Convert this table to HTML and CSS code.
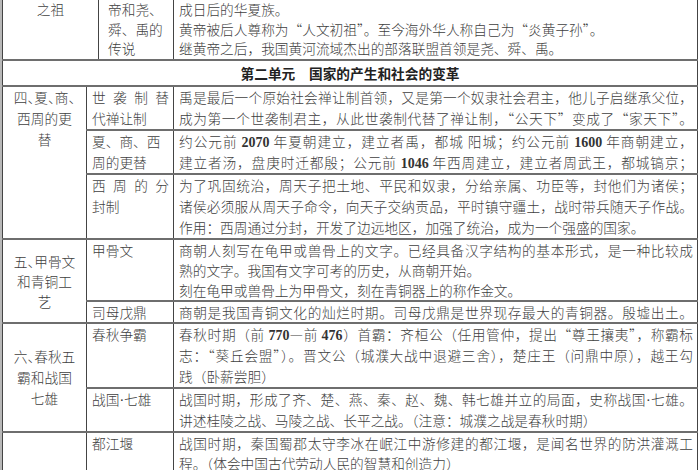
FILE: index.html
```html
<!DOCTYPE html>
<html lang="zh-CN">
<head>
<meta charset="utf-8">
<title>历史复习提纲</title>
<link rel="stylesheet" href="styles.css">
</head>
<body>
<div class="sheet">
<table class="notes">
<colgroup><col class="ca"><col class="cb"><col class="cc"><col class="cd"></colgroup>
<tr class="r0">
<td colspan="2" class="k top"><span class="ln">之祖</span></td>
<td class="s s0"><span class="ln">帝和尧、</span><span class="ln">舜、禹的</span><span class="ln">传说</span></td>
<td class="d"><span class="ln">成日后的华夏族。</span><span class="ln">黄帝被后人尊称为“人文初祖”。至今海外华人称自己为“炎黄子孙”。</span><span class="ln">继黄帝之后，我国黄河流域杰出的部落联盟首领是尧、舜、禹。</span></td>
</tr>
<tr class="hd">
<td colspan="4" class="unit">第二单元　国家的产生和社会的变革</td>
</tr>
<tr class="r1a">
<td rowspan="3" class="k top"><span class="ln halt">四、夏、商、</span><span class="ln">西周的更</span><span class="ln">替</span></td>
<td colspan="2" class="s"><span class="ln j">世袭制替</span><span class="ln">代禅让制</span></td>
<td class="d"><span class="ln j">禹是最后一个原始社会禅让制首领，又是第一个奴隶社会君主，他儿子启继承父位，</span><span class="ln j">成为第一个世袭制君主，从此世袭制代替了禅让制，“公天下”变成了“家天下”。</span></td>
</tr>
<tr class="r1b">
<td colspan="2" class="s"><span class="ln">夏、商、西</span><span class="ln">周的更替</span></td>
<td class="d"><span class="ln j">约公元前 <span class="num">2070</span> 年夏朝建立，建立者禹，都城 阳城；约公元前 <span class="num">1600</span> 年商朝建立，</span><span class="ln j">建立者汤，盘庚时迁都殷；公元前 <span class="num">1046</span> 年西周建立，建立者周武王，都城镐京；</span></td>
</tr>
<tr class="r1c">
<td colspan="2" class="s"><span class="ln j">西周的分</span><span class="ln">封制</span></td>
<td class="d"><span class="ln j">为了巩固统治，周天子把土地、平民和奴隶，分给亲属、功臣等，封他们为诸侯；</span><span class="ln j">诸侯必须服从周天子命令，向天子交纳贡品，平时镇守疆土，战时带兵随天子作战。</span><span class="ln">作用：西周通过分封，开发了边远地区，加强了统治，成为一个强盛的国家。</span></td>
</tr>
<tr class="r2a">
<td rowspan="2" class="k mid"><span class="ln halt">五、甲骨文</span><span class="ln">和青铜工</span><span class="ln">艺</span></td>
<td colspan="2" class="s"><span class="ln">甲骨文</span></td>
<td class="d"><span class="ln j">商朝人刻写在龟甲或兽骨上的文字。已经具备汉字结构的基本形式，是一种比较成</span><span class="ln">熟的文字。我国有文字可考的历史，从商朝开始。</span><span class="ln">刻在龟甲或兽骨上为甲骨文，刻在青铜器上的称作金文。</span></td>
</tr>
<tr class="r2b">
<td colspan="2" class="s"><span class="ln">司母戊鼎</span></td>
<td class="d"><span class="ln j">商朝是我国青铜文化的灿烂时期。司母戊鼎是世界现存最大的青铜器。殷墟出土。</span></td>
</tr>
<tr class="r3a">
<td rowspan="2" class="k mid"><span class="ln halt">六、春秋五</span><span class="ln">霸和战国</span><span class="ln">七雄</span></td>
<td colspan="2" class="s"><span class="ln">春秋争霸</span></td>
<td class="d"><span class="ln j">春秋时期（前 <span class="num">770</span>—前 <span class="num">476</span>）首霸：齐桓公（任用管仲，提出“尊王攘夷”，称霸标</span><span class="ln j">志：“葵丘会盟”）。晋文公（城濮大战中退避三舍），楚庄王（问鼎中原），越王勾</span><span class="ln">践（卧薪尝胆）</span></td>
</tr>
<tr class="r3b">
<td colspan="2" class="s"><span class="ln">战国<span class="num thin">·</span>七雄</span></td>
<td class="d"><span class="ln j">战国时期，形成了齐、楚、燕、秦、赵、魏、韩七雄并立的局面，史称战国<span class="num thin">·</span>七雄。</span><span class="ln">讲述桂陵之战、马陵之战、长平之战。（注意：城濮之战是春秋时期）</span></td>
</tr>
<tr class="r4a">
<td class="k mid"></td>
<td colspan="2" class="s"><span class="ln">都江堰</span></td>
<td class="d"><span class="ln j">战国时期，秦国蜀郡太守李冰在岷江中游修建的都江堰，是闻名世界的防洪灌溉工</span><span class="ln">程。（体会中国古代劳动人民的智慧和创造力）</span></td>
</tr>
</table>
</div>
</body>
</html>
```

FILE: styles.css
```css
html, body {
  margin: 0;
  padding: 0;
  background: #ffffff;
}

body {
  width: 700px;
  height: 470px;
  overflow: hidden;
  font-family: "Noto Sans CJK SC", "Noto Sans", sans-serif;
  font-size: 13.7px;
  font-weight: 300;
  color: #404040;
}

.sheet {
  height: 470px;
  overflow: hidden;
  border-left: 2px solid #b8b8b8;
}

.notes {
  border-collapse: collapse;
  table-layout: fixed;
  width: 695px;
}

.ca { width: 84px; }
.cb { width: 12px; }
.cc { width: 75px; }
.cd { width: 524px; }

.notes td {
  border: 1px solid #444444;
  padding: 0 4px 0 5px;
  line-height: 21px;
  vertical-align: top;
}

.notes tr {
  border-bottom: 2px solid #6e6e6e;
}

.notes .r0 td {
  border-top: 0;
  line-height: 19.5px;
}

.notes .r2a td,
.notes .r2b td {
  line-height: 20px;
}

.notes .r3a td {
  line-height: 21px;
}

.notes .r4a td {
  line-height: 20px;
}

.ln {
  display: block;
  white-space: nowrap;
}

.j {
  white-space: normal;
  text-align: justify;
  text-align-last: justify;
}

.num {
  font-family: "Liberation Serif", serif;
  font-size: 14px;
  font-weight: 700;
  line-height: 0;
  color: #333333;
}

.num.thin {
  font-weight: 400;
}

.notes td.k {
  text-align: center;
  padding-left: 1px;
  padding-right: 1px;
}

.notes td.top { vertical-align: top; }
.notes td.mid { vertical-align: middle; }

.halt {
  font-feature-settings: "halt" 1;
}

.notes td.s0 {
  padding-left: 9px;
}

.notes td.unit {
  text-align: center;
  font-weight: 700;
  color: #222222;
  padding: 2px 0 1px;
}
```
